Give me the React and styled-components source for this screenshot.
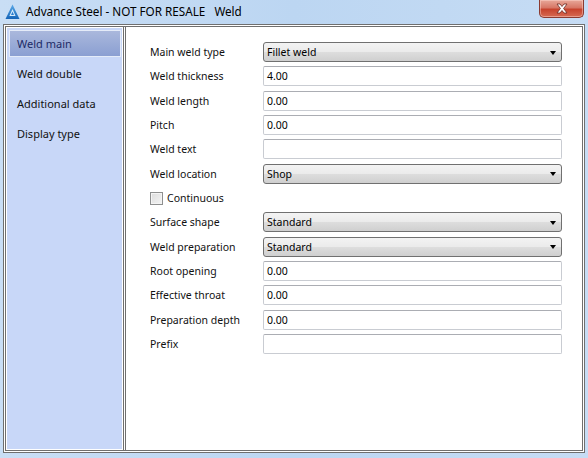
import styled, { createGlobalStyle } from "styled-components";

const GlobalStyle = createGlobalStyle`
  html, body {
    margin: 0;
    padding: 0;
    background: #c4dbf4;
  }
  body {
    font-family: "Noto Sans", "Liberation Sans", sans-serif;
  }
`;

const Window = styled.div`
  width: 588px;
  height: 458px;
  display: flex;
  flex-direction: column;
  background: linear-gradient(90deg, #c9def5 0%, #bcd6f2 50%, #c6dcf4 100%);
  overflow: hidden;
`;

const TitleBar = styled.div`
  height: 24px;
  display: flex;
  align-items: flex-start;
  position: relative;
  padding-left: 5px;
`;

const TitleIcon = styled.svg`
  width: 15px;
  height: 16px;
  margin-top: 4px;
`;

const TitleText = styled.div`
  margin-left: 6px;
  margin-top: 3px;
  font-size: 11.7px;
  color: #000;
  white-space: pre;
`;

const CloseButton = styled.div`
  position: absolute;
  top: 0;
  right: 4px;
  width: 45px;
  height: 18px;
  box-sizing: border-box;
  border: 1px solid #8b3a30;
  border-top: none;
  border-radius: 0 0 5px 5px;
  background: linear-gradient(180deg, #e8a899 0%, #d77766 45%, #c7432d 55%, #d66a52 100%);
  box-shadow: inset 0 0 0 1px rgba(255, 220, 210, 0.45);
  display: flex;
  align-items: center;
  justify-content: center;
`;

const Frame = styled.div`
  flex: 1;
  margin: 0 3px 5px 3px;
  display: flex;
  border: 3px double #6f6f6f;
  background: #fff;
`;

const NavWrap = styled.div`
  width: 115px;
  padding: 1px;
  background: #fff;
  border-right: 3px double #6f6f6f;
  display: flex;
`;

const Nav = styled.div`
  flex: 1;
  background: #c8d7f8;
  display: flex;
  flex-direction: column;
  padding: 2px 1px 0 2px;
`;

const NavItem = styled.div`
  height: 27px;
  margin-bottom: 3px;
  display: flex;
  align-items: center;
  padding-left: 7px;
  font-size: 11px;
  box-sizing: border-box;
  color: ${(p) => (p.$active ? "#1d2a66" : "#111")};
  border: 1px solid ${(p) => (p.$active ? "#e4ebf8" : "transparent")};
  background: ${(p) =>
    p.$active ? "linear-gradient(180deg, #aab8dc 0%, #97a9d6 60%, #8b9fd2 100%)" : "transparent"};
`;

const Panel = styled.div`
  flex: 1;
  padding: 15px 0 0 24px;
`;

const Form = styled.div`
  display: grid;
  grid-template-columns: 113px 299px;
  grid-auto-rows: 20px;
  row-gap: 4.35px;
  align-items: center;
`;

const Label = styled.div`
  font-size: 10.5px;
  color: #111;
  white-space: nowrap;
`;

const Input = styled.div`
  height: 20px;
  box-sizing: border-box;
  border: 1px solid #c9ccd2;
  border-top-color: #abadb3;
  border-radius: 2px;
  background: #fff;
  font-size: 10.5px;
  color: #000;
  display: flex;
  align-items: center;
  padding-left: 3px;
`;

const Select = styled.div`
  height: 20px;
  box-sizing: border-box;
  border: 1px solid #707070;
  border-radius: 3px;
  background: linear-gradient(180deg, #f3f3f3 0%, #ebebeb 48%, #dddddd 52%, #cfcfcf 100%);
  font-size: 10.5px;
  color: #000;
  display: flex;
  align-items: center;
  justify-content: space-between;
  padding: 0 5px 0 3px;
`;

const Arrow = styled.span`
  width: 0;
  height: 0;
  border-left: 3.5px solid transparent;
  border-right: 3.5px solid transparent;
  border-top: 4px solid #000;
  margin-top: 1px;
`;

const CheckRow = styled.label`
  grid-column: 1 / span 2;
  display: flex;
  align-items: center;
  font-size: 10.5px;
  color: #111;
`;

const CheckBox = styled.span`
  width: 13px;
  height: 13px;
  box-sizing: border-box;
  border: 1px solid #8e8f8f;
  background: linear-gradient(135deg, #dcdcdc 0%, #f4f4f4 100%);
  box-shadow: inset 0 0 0 1px #f4f4f4;
  margin-right: 4px;
`;

const rows = [
  { label: "Main weld type", kind: "select", value: "Fillet weld" },
  { label: "Weld thickness", kind: "input", value: "4.00" },
  { label: "Weld length", kind: "input", value: "0.00" },
  { label: "Pitch", kind: "input", value: "0.00" },
  { label: "Weld text", kind: "input", value: "" },
  { label: "Weld location", kind: "select", value: "Shop" },
  { label: "Continuous", kind: "check" },
  { label: "Surface shape", kind: "select", value: "Standard" },
  { label: "Weld preparation", kind: "select", value: "Standard" },
  { label: "Root opening", kind: "input", value: "0.00" },
  { label: "Effective throat", kind: "input", value: "0.00" },
  { label: "Preparation depth", kind: "input", value: "0.00" },
  { label: "Prefix", kind: "input", value: "" },
];

const navItems = ["Weld main", "Weld double", "Additional data", "Display type"];

export default function App() {
  return (
    <Window>
      <GlobalStyle />
      <TitleBar>
        <TitleIcon viewBox="0 0 15 16">
          <defs>
            <linearGradient id="ag" x1="0" y1="0" x2="0" y2="1">
              <stop offset="0" stopColor="#5aa9e8" />
              <stop offset="1" stopColor="#1665b8" />
            </linearGradient>
          </defs>
          <path d="M7.5 0.5 L14.5 15 L0.5 15 Z" fill="url(#ag)" />
          <path d="M7.5 5 L10.6 12 L4.4 12 Z" fill="#d8ecfb" />
          <path d="M7.5 7.5 L9 11 L6 11 Z" fill="#2c7fd0" />
        </TitleIcon>
        <TitleText>{"Advance Steel - NOT FOR RESALE   Weld"}</TitleText>
        <CloseButton>
          <svg width="14" height="11" viewBox="0 0 14 11">
            <path
              d="M2 1 L5 1 L7 3.5 L9 1 L12 1 L8.6 5.5 L12 10 L9 10 L7 7.5 L5 10 L2 10 L5.4 5.5 Z"
              fill="#fff"
              stroke="#6b2a22"
              strokeWidth="0.8"
            />
          </svg>
        </CloseButton>
      </TitleBar>
      <Frame>
        <NavWrap>
          <Nav>
            {navItems.map((n, i) => (
              <NavItem key={n} $active={i === 0}>
                {n}
              </NavItem>
            ))}
          </Nav>
        </NavWrap>
        <Panel>
          <Form>
            {rows.map((r) =>
              r.kind === "check" ? (
                <CheckRow key={r.label}>
                  <CheckBox />
                  {r.label}
                </CheckRow>
              ) : (
                <>
                  <Label key={r.label}>{r.label}</Label>
                  {r.kind === "select" ? (
                    <Select key={r.label + "-f"}>
                      <span>{r.value}</span>
                      <Arrow />
                    </Select>
                  ) : (
                    <Input key={r.label + "-f"}>{r.value}</Input>
                  )}
                </>
              )
            )}
          </Form>
        </Panel>
      </Frame>
    </Window>
  );
}
